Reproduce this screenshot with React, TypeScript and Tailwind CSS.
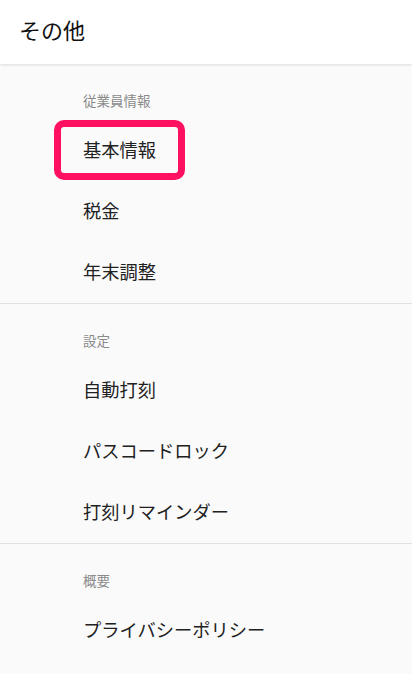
const font = { fontFamily: '"Noto Sans CJK JP", "Noto Sans", sans-serif' };

type Section = { title: string; items: string[] };

const sections: Section[] = [
  { title: '従業員情報', items: ['基本情報', '税金', '年末調整'] },
  { title: '設定', items: ['自動打刻', 'パスコードロック', '打刻リマインダー'] },
  { title: '概要', items: ['プライバシーポリシー'] },
];

export default function App() {
  return (
    <div className="w-[412px] h-[674px] overflow-hidden bg-[#fafafa]" style={font}>
      <header className="relative z-10 h-[64px] flex items-center px-[19px] pb-[6px] bg-white shadow-[0_1px_3px_rgba(0,0,0,0.12)]">
        <h1 className="text-[22px] text-[#111] leading-none">その他</h1>
      </header>
      <main>
        {sections.map((section, si) => (
          <section key={section.title} className={`pb-[1px] ${si > 0 ? 'border-t border-[#e0e0e0]' : ''}`}>
            <div className="pl-[83px] pt-[26px] pb-[9px] text-[13.5px] leading-5 text-[#8a8a8a]">
              {section.title}
            </div>
            {section.items.map((item, i) => (
              <div key={item} className="relative h-[61px] flex items-center pl-[83px] text-[18.25px] text-[#212121]">
                {item}
                {si === 0 && i === 0 && (
                  <span className="absolute left-[54px] top-[1px] w-[131px] h-[60px] rounded-[10px] border-[7px] border-[#ff1060]" />
                )}
              </div>
            ))}
          </section>
        ))}
      </main>
    </div>
  );
}
